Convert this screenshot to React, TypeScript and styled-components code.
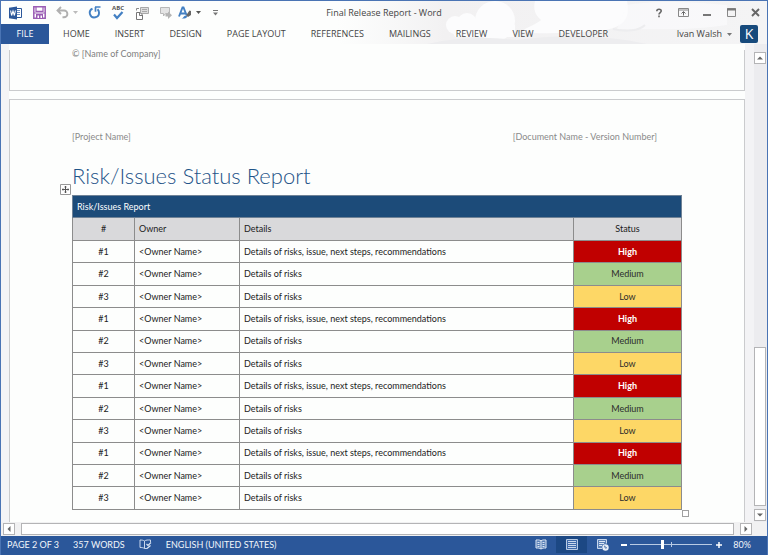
import React from 'react';
import styled, { createGlobalStyle, css } from 'styled-components';

const UI = '"Open Sans", "Noto Sans", sans-serif';
const BODY = 'Lato, "Open Sans", sans-serif';
const BLUE = '#2b579a';
const PAPER = '#fdfefd';

const Global = createGlobalStyle`
  * { box-sizing: border-box; }
  body { margin: 0; background: ${PAPER}; font-family: ${UI}; color: #444; }
  button { font: inherit; color: inherit; background: none; border: 0; padding: 0; margin: 0; cursor: pointer; }
`;

const Window = styled.div`
  display: flex;
  flex-direction: column;
  min-height: 100vh;
  border: 1px solid #4a74b4;
  border-bottom: 0;
  background: ${PAPER};
`;

/* ---------- Title bar and ribbon tabs ---------- */

const Ribbon = styled.header`
  position: relative;
  overflow: hidden;
`;

const Clouds = styled.svg`
  position: absolute;
  top: 0;
  right: 0;
  height: 100%;
`;

const TitleBar = styled.div`
  position: relative;
  display: grid;
  grid-template-columns: 1fr auto 1fr;
  align-items: center;
  height: 23px;
`;

const QuickAccess = styled.div`
  display: flex;
  align-items: center;
  gap: 10px;
  padding-left: 7px;
`;

const QuickGroup = styled.div`
  display: flex;
  align-items: center;
  gap: 6px;
`;

const QuickButton = styled.button`
  display: flex;
  align-items: center;
  gap: 4px;
  height: 16px;

  svg { display: block; }
`;

const WindowTitle = styled.h1`
  margin: 0;
  font-size: 9px;
  font-weight: 400;
  line-height: 14px;
`;

const WindowButtons = styled.div`
  display: flex;
  justify-content: flex-end;
`;

const WindowButton = styled.button`
  display: flex;
  align-items: center;
  justify-content: center;
  width: 24px;
  height: 20px;
`;

const TabBar = styled.nav`
  position: relative;
  display: flex;
  align-items: center;
  gap: 25px;
  height: 20px;
  padding-right: 9px;
  font-size: 9px;
  line-height: 20px;
`;

const FileTab = styled.button`
  width: 48px;
  height: 20px;
  margin-right: -11px;
  background: ${BLUE};
  color: #fff;
`;

const Tab = styled.button`
  height: 20px;
  white-space: nowrap;
`;

const Account = styled.div`
  display: flex;
  align-items: center;
  gap: 8px;
  margin-left: auto;
`;

const AccountName = styled.button`
  display: flex;
  align-items: center;
  gap: 5px;
  white-space: nowrap;
`;

const Avatar = styled.span`
  display: flex;
  align-items: center;
  justify-content: center;
  width: 18px;
  height: 18px;
  border-radius: 2px;
  background: #174a7c;
  color: #fff;
  font-size: 14px;
`;

/* ---------- Document area ---------- */

const Workspace = styled.main`
  display: flex;
  flex: 1;
`;

const Viewport = styled.div`
  display: flex;
  flex: 1;
  flex-direction: column;
  gap: 8px;
  padding: 6px 9px 0 8px;
  background: linear-gradient(90deg, #f4f4f6 8px, ${PAPER} 8px, ${PAPER} calc(100% - 9px), #f3f3f5 calc(100% - 9px));
`;

const Page = styled.article<{ $part: 'end' | 'start' }>`
  border: 1px solid #cacbcd;
  background: ${PAPER};
  font-family: ${BODY};
  font-size: 9px;
  ${({ $part }) =>
    $part === 'end'
      ? css`
          min-height: 41px;
          padding: 0 62px;
          border-top: 0;
        `
      : css`
          flex: 1;
          padding: 30px 62px 11px;
          border-bottom: 0;
        `}
`;

const Footnote = styled.p`
  margin: 0;
  color: #7f7f7f;
  line-height: 8px;
`;

const PageHeader = styled.div`
  display: flex;
  justify-content: space-between;
  padding-right: 25px;
  color: #8a8a8a;
  line-height: 14px;
`;

const Heading = styled.h2`
  margin: 18px 0 5px;
  color: #1f5488;
  font-size: 22px;
  font-weight: 300;
  line-height: 28px;
`;

const TableFrame = styled.div`
  position: relative;
`;

const MoveHandle = styled.button`
  position: absolute;
  top: -11px;
  left: -12px;
  width: 11px;
  height: 11px;

  svg { display: block; }
`;

const ResizeHandle = styled.span`
  position: absolute;
  right: -7px;
  bottom: -7px;
  width: 7px;
  height: 7px;
  border: 1px solid #a0a0a0;
  background: #fff;
`;

const RiskTable = styled.table`
  width: 100%;
  height: 315px;
  border-collapse: collapse;
  table-layout: fixed;
  color: #1c1c1c;
  line-height: 12px;
`;

const Col = styled.col<{ $width?: number }>`
  width: ${({ $width }) => ($width ? `${$width}px` : 'auto')};
`;

const cell = css<{ $center?: boolean }>`
  padding: 0 4px;
  border: 1px solid #8c8c8c;
  font-weight: 400;
  text-align: ${({ $center }) => ($center ? 'center' : 'left')};
`;

const BannerCell = styled.th`
  ${cell}
  height: 22px;
  background: #1c4b79;
  border-color: #6f8296;
  color: #fff;
`;

const HeadCell = styled.th`
  ${cell}
  height: 23px;
  background: #d9d9db;
`;

const Cell = styled.td`
  ${cell}
`;

type Level = 'High' | 'Medium' | 'Low';
const LEVELS: Record<Level, string> = { High: '#c00000', Medium: '#a8d08d', Low: '#fdd766' };

const StatusCell = styled(Cell)<{ $level: Level }>`
  background: ${({ $level }) => LEVELS[$level]};
  color: ${({ $level }) => ($level === 'High' ? '#fff' : '#2c2c2c')};
  font-weight: ${({ $level }) => ($level === 'High' ? 700 : 400)};
`;

/* ---------- Scroll bars ---------- */

const VerticalBar = styled.div`
  display: flex;
  flex-direction: column;
  width: 13px;
  padding: 8px 1px 1px 0;
  background: #ececef;
`;

const HorizontalBar = styled.div`
  display: flex;
  align-items: center;
  gap: 6px;
  height: 14px;
  padding: 0 15px 0 2px;
  background: #f1f1f2;
`;

const ArrowButton = styled.button`
  display: flex;
  flex: none;
  align-items: center;
  justify-content: center;
  width: 12px;
  height: 12px;
  border: 1px solid #b4b4b6;
  background: #fff;
`;

const VerticalTrack = styled.div`
  display: grid;
  flex: 1;
  grid-template-rows: 283fr 159fr 3fr;
`;

const Thumb = styled.div`
  flex: 1;
  grid-row: 2;
  min-height: 12px;
  border: 1px solid #b4b4b6;
  background: #fff;
`;

/* ---------- Status bar ---------- */

const StatusBar = styled.footer`
  display: flex;
  align-items: center;
  height: 19px;
  padding: 0 16px 2px 6px;
  background: ${BLUE};
  color: #f2f6fb;
  font-family: ${BODY};
  font-size: 9px;
  line-height: 17px;
`;

const StatusGroup = styled.div`
  display: flex;
  align-items: center;
  gap: 14px;
  margin-right: auto;
  white-space: nowrap;
`;

const ViewButton = styled.button<{ $active?: boolean }>`
  display: flex;
  align-items: center;
  justify-content: center;
  width: 31px;
  height: 17px;
  background: ${({ $active }) => ($active ? '#1c4884' : 'transparent')};
`;

const ZoomButton = styled.button`
  display: flex;
  align-items: center;
  justify-content: center;
  width: 11px;
  height: 17px;
`;

const ZoomSlider = styled.input`
  appearance: none;
  width: 82px;
  height: 11px;
  margin: 0 1px;
  background:
    linear-gradient(#b9cbe4, #b9cbe4) center / 1px 5px no-repeat,
    linear-gradient(#b9cbe4, #b9cbe4) center / 100% 1px no-repeat;

  &::-webkit-slider-thumb {
    appearance: none;
    width: 3px;
    height: 9px;
    background: #fff;
  }
`;

const ZoomValue = styled.button`
  width: 27px;
  text-align: right;
`;

/* ---------- Icons ---------- */

const Caret = ({ color = '#777' }: { color?: string }) => (
  <svg width="5" height="3" viewBox="0 0 5 3" aria-hidden="true"><path d="M0 0h5L2.5 3z" fill={color} /></svg>
);

const Arrow = ({ d }: { d: string }) => (
  <svg width="8" height="8" viewBox="0 0 8 8" aria-hidden="true"><path d={d} fill="#666" /></svg>
);

const WordIcon = () => (
  <svg width="15" height="14" viewBox="0 0 15 14" aria-hidden="true">
    <path d="M8.5 2.5h5v9h-5" fill="#fff" stroke={BLUE} />
    <path d="M9 4.5h3M9 6.5h3M9 8.500h3" stroke="#6f91c4" />
    <path d="M1 1.800 9 .500v13L1 12.200z" fill={BLUE} />
    <path d="m2.600 4.500 1 5 1.400-4.500 1.400 4.500 1-5" fill="none" stroke="#fff" strokeWidth="1.100" />
  </svg>
);

const SaveIcon = () => (
  <svg width="13" height="13" viewBox="0 0 13 13" aria-hidden="true">
    <path d="M.800.800h11.400v11.400H.800z" fill="#fff" stroke="#9a5cb4" strokeWidth="1.500" />
    <path d="M3 .800v4.500h7V.800M1 7h11" fill="none" stroke="#9a5cb4" strokeWidth="1.200" />
    <path d="M3 8h7v4.500H3z" fill="#9a5cb4" />
    <path d="M4.500 9.500h1.500V12H4.500zM7.500 9.500H9V12H7.500z" fill="#fff" />
  </svg>
);

const UndoIcon = () => (
  <svg width="13" height="13" viewBox="0 0 13 13" aria-hidden="true">
    <path d="M5 1 1.500 4.500 5 8M2 4.500h6a3.200 3.200 0 0 1 0 6.800H6.500" fill="none" stroke="#b0b0b0" strokeWidth="1.900" />
  </svg>
);

const RedoIcon = () => (
  <svg width="13" height="13" viewBox="0 0 13 13" aria-hidden="true">
    <path d="M4.500 2.600A4.600 4.600 0 1 0 11 6.500 4.600 4.600 0 0 0 9.500 3.200" fill="none" stroke="#4380c3" strokeWidth="1.900" />
    <path d="M7 1h5.500M7.500 1v4.800" fill="none" stroke="#4380c3" strokeWidth="1.700" />
  </svg>
);

const SpellIcon = () => (
  <svg width="14" height="15" viewBox="0 0 14 15" aria-hidden="true">
    <text x="7" y="5" textAnchor="middle" fontFamily="Open Sans, sans-serif" fontSize="6" fontWeight="700" fill="#555">ABC</text>
    <path d="m3 9.500 3 3.500 5.500-6" fill="none" stroke="#4380c3" strokeWidth="2.200" />
  </svg>
);

const SwitchIcon = () => (
  <svg width="14" height="14" viewBox="0 0 14 14" aria-hidden="true">
    <path d="M5.500 1.500h8v6h-8z" fill="#ddd" stroke="#a9a9a9" />
    <path d="M7 3.500h5M7 5.500h5" stroke="#a9a9a9" />
    <path d="M1.500 6.500H5l2.500 2.500v4.500h-6z" fill="#fff" stroke="#777" />
    <path d="M4.500 6.500v3h3" fill="none" stroke="#777" />
    <path d="M1.500 4.500v-2h2.500" fill="none" stroke="#888" />
  </svg>
);

const CommentIcon = () => (
  <svg width="13" height="14" viewBox="0 0 13 14" aria-hidden="true">
    <path d="M1.500 1.500h9v6h-4L4.500 10V7.500h-3z" fill="#e4e4e4" stroke="#b8b8b8" />
    <path d="M6.500 8H9V5.500L13 9.300 9 13v-2.500H6.500z" fill="#b4b4b4" />
  </svg>
);

const StyleIcon = () => (
  <svg width="14" height="14" viewBox="0 0 14 14" aria-hidden="true">
    <path d="M1 10.500 4.500 1.500h1L8.500 9M2.500 7.500h5" fill="none" stroke="#4380c3" strokeWidth="1.900" />
    <path d="m8 9.500 3.500-5 1.500.500V9l-3 2z" fill="#666" />
    <path d="M3.500 12.500c2 0 2-3 4.500-3 2 .500 1.500 3.500-4.500 3z" fill="#4380c3" />
  </svg>
);

const ProofIcon = () => (
  <svg width="13" height="11" viewBox="0 0 13 11" aria-hidden="true">
    <path d="M5.500 2v7.500M5.500 2C4 1 2.500 1 1 1v7.500c1.500 0 3 0 4.500 1M5.500 2C7 .800 9 1 11.500 1v2M5.500 9.500H8" fill="none" stroke="#c9d7ec" />
    <path d="m7.500 5 1.500 1.500L12 3.500M8 9.500 11.500 6.500" fill="none" stroke="#dce6f4" strokeWidth="1.200" />
  </svg>
);

const ReadIcon = () => (
  <svg width="12" height="11" viewBox="0 0 12 11" aria-hidden="true">
    <path d="M6 1.800C4.500.800 3 .800 1 1v8c2 0 3.500 0 5 1 1.500-1 3-1 5-1V1c-2-.200-3.500-.200-5 .800z" fill="#5d82b8" stroke="#dce6f4" />
    <path d="M6 2v8M2.500 3.500h2M2.500 5.500h2M2.500 7.500h2M7.500 3.500h2M7.500 5.500h2M7.500 7.500h2" stroke="#dce6f4" />
  </svg>
);

const PrintIcon = () => (
  <svg width="12" height="11" viewBox="0 0 12 11" aria-hidden="true">
    <path d="M.500.500h11v10H.500z" fill="#3f6bab" stroke="#b9cbe4" />
    <path d="M2 2.500h8M2 4.500h8M2 6.500h8M2 8.500h8" stroke="#c9d7ec" />
  </svg>
);

const WebIcon = () => (
  <svg width="12" height="12" viewBox="0 0 12 12" aria-hidden="true">
    <path d="M5 9.500H.500v-9h9v4" fill="#5d82b8" stroke="#c9d7ec" />
    <path d="M2 2.500h6M2 4.500h5M2 6.500h3" stroke="#dce6f4" />
    <circle cx="8.500" cy="8.500" r="3.200" fill="#e6edf7" />
    <path d="M7 7.500c1-.800 1.500 0 1 .800s1.500 1 2 .200" fill="none" stroke={BLUE} strokeWidth=".900" />
  </svg>
);

/* ---------- Data ---------- */

const TABS = ['HOME', 'INSERT', 'DESIGN', 'PAGE LAYOUT', 'REFERENCES', 'MAILINGS', 'REVIEW', 'VIEW', 'DEVELOPER'];

const RISKS: { id: string; details: string; level: Level }[] = [
  { id: '#1', details: 'Details of risks, issue, next steps, recommendations', level: 'High' },
  { id: '#2', details: 'Details of risks', level: 'Medium' },
  { id: '#3', details: 'Details of risks', level: 'Low' },
];
const ROWS = [0, 1, 2, 3].flatMap((group) => RISKS.map((risk) => ({ ...risk, key: `${group}${risk.id}` })));

export default function App() {
  return (
    <Window>
      <Global />
      <Ribbon>
        <Clouds width="430" height="43" viewBox="0 0 430 43" aria-hidden="true">
          <defs>
            <linearGradient id="sky" x1="0" x2="1">
              <stop offset="0" stopColor="#f3f3f4" stopOpacity="0" />
              <stop offset=".25" stopColor="#f2f1f2" />
              <stop offset="1" stopColor="#f4f4f5" />
            </linearGradient>
          </defs>
          <path d="M0 0h430v43H0z" fill="url(#sky)" />
          <g fill="#fcfcfd">
            <circle cx="158" cy="20" r="20" />
            <circle cx="130" cy="22" r="10" />
            <circle cx="118" cy="24" r="9" />
            <path d="M112 24h66v12h-60z" />
            <path d="M198 0h92c4 18-4 28-30 30-24 1-50 4-76 1 6-5 16-8 20-12-6-5-8-11-6-19z" />
            <path d="M290 4c20-4 60-4 100 0v20c-40 6-80 4-110 4z" opacity=".6" />
          </g>
          <path d="M90 43c30-7 60-8 90-4 40-6 90-5 130 4z" fill="#ededef" />
          <path d="M276 28c12 3 26 2 32-4" fill="none" stroke="#ededef" strokeWidth="2" />
        </Clouds>
        <TitleBar>
          <QuickAccess>
            <QuickButton aria-label="Word"><WordIcon /></QuickButton>
            <QuickButton aria-label="Save"><SaveIcon /></QuickButton>
            <QuickButton aria-label="Undo"><UndoIcon /><Caret color="#bbb" /></QuickButton>
            <QuickButton aria-label="Repeat"><RedoIcon /></QuickButton>
            <QuickButton aria-label="Spelling"><SpellIcon /></QuickButton>
            <QuickButton aria-label="Switch windows"><SwitchIcon /></QuickButton>
            <QuickGroup>
              <QuickButton aria-label="Next comment"><CommentIcon /></QuickButton>
              <QuickButton aria-label="Styles"><StyleIcon /><Caret color="#555" /></QuickButton>
            </QuickGroup>
            <QuickButton aria-label="Customize toolbar">
              <svg width="9" height="6" viewBox="0 0 9 6" aria-hidden="true">
                <path d="M2 .500h5" stroke="#777" /><path d="M2 2.500h5L4.500 5.500z" fill="#777" />
              </svg>
            </QuickButton>
          </QuickAccess>
          <WindowTitle>Final Release Report - Word</WindowTitle>
          <WindowButtons>
            <WindowButton aria-label="Help">
              <svg width="8" height="10" viewBox="0 0 8 10" aria-hidden="true">
                <path d="M1.800 3.200C1.800.600 6.200.600 6.200 3c0 1.500-2.200 1.600-2.200 3.500M4 7.500v1.700" fill="none" stroke="#666" strokeWidth="1.600" />
              </svg>
            </WindowButton>
            <WindowButton aria-label="Ribbon display options">
              <svg width="11" height="9" viewBox="0 0 11 9" aria-hidden="true">
                <path d="M.500.500h10v8H.500zM.500 2h10" fill="none" stroke="#888" />
                <path d="M5.500 7.500V4M3.500 5.500l2-2 2 2" fill="none" stroke="#666" />
              </svg>
            </WindowButton>
            <WindowButton aria-label="Minimize">
              <svg width="8" height="8" viewBox="0 0 8 8" aria-hidden="true"><path d="M0 6h8" stroke="#777" strokeWidth="2" /></svg>
            </WindowButton>
            <WindowButton aria-label="Maximize">
              <svg width="9" height="9" viewBox="0 0 9 9" aria-hidden="true">
                <path d="M.500.500h8v8h-8z" fill="none" stroke="#888" /><path d="M0 1.500h9" stroke="#777" strokeWidth="2" />
              </svg>
            </WindowButton>
            <WindowButton aria-label="Close">
              <svg width="9" height="9" viewBox="0 0 9 9" aria-hidden="true"><path d="m1 1 7 7M8 1 1 8" stroke="#666" strokeWidth="1.900" /></svg>
            </WindowButton>
          </WindowButtons>
        </TitleBar>
        <TabBar>
          <FileTab>FILE</FileTab>
          {TABS.map((tab) => <Tab key={tab}>{tab}</Tab>)}
          <Account>
            <AccountName>Ivan Walsh <Caret /></AccountName>
            <Avatar>K</Avatar>
          </Account>
        </TabBar>
      </Ribbon>

      <Workspace>
        <Viewport>
          <Page $part="end">
            <Footnote>© [Name of Company]</Footnote>
          </Page>
          <Page $part="start">
            <PageHeader>
              <span>[Project Name]</span>
              <span>[Document Name - Version Number]</span>
            </PageHeader>
            <Heading>Risk/Issues Status Report</Heading>
            <TableFrame>
              <MoveHandle aria-label="Move table">
                <svg width="11" height="11" viewBox="0 0 11 11" aria-hidden="true">
                  <path d="M.500.500h10v10H.500z" fill="#fff" stroke="#999" />
                  <path d="M5.500 2v7M2 5.500h7M4.500 3h2M4.500 8h2M3 4.500v2M8 4.500v2" stroke="#555" />
                </svg>
              </MoveHandle>
              <RiskTable>
                <colgroup>
                  <Col $width={62} />
                  <Col $width={105} />
                  <Col />
                  <Col $width={108} />
                </colgroup>
                <thead>
                  <tr><BannerCell colSpan={4}>Risk/Issues Report</BannerCell></tr>
                  <tr>
                    <HeadCell $center>#</HeadCell>
                    <HeadCell>Owner</HeadCell>
                    <HeadCell>Details</HeadCell>
                    <HeadCell $center>Status</HeadCell>
                  </tr>
                </thead>
                <tbody>
                  {ROWS.map((row) => (
                    <tr key={row.key}>
                      <Cell $center>{row.id}</Cell>
                      <Cell>&lt;Owner Name&gt;</Cell>
                      <Cell>{row.details}</Cell>
                      <StatusCell $center $level={row.level}>{row.level}</StatusCell>
                    </tr>
                  ))}
                </tbody>
              </RiskTable>
              <ResizeHandle />
            </TableFrame>
          </Page>
        </Viewport>
        <VerticalBar>
          <ArrowButton aria-label="Scroll up"><Arrow d="M1 5.500h6L4 2.500z" /></ArrowButton>
          <VerticalTrack><Thumb /></VerticalTrack>
          <ArrowButton aria-label="Scroll down"><Arrow d="M1 2.500h6L4 5.500z" /></ArrowButton>
        </VerticalBar>
      </Workspace>
      <HorizontalBar>
        <ArrowButton aria-label="Scroll left"><Arrow d="M5.500 1v6L2.500 4z" /></ArrowButton>
        <Thumb />
        <ArrowButton aria-label="Scroll right"><Arrow d="M2.500 1v6L5.500 4z" /></ArrowButton>
      </HorizontalBar>

      <StatusBar>
        <StatusGroup>
          <span>PAGE 2 OF 3</span>
          <span>357 WORDS</span>
          <ProofIcon />
          <span>ENGLISH (UNITED STATES)</span>
        </StatusGroup>
        <ViewButton aria-label="Read mode"><ReadIcon /></ViewButton>
        <ViewButton aria-label="Print layout" $active><PrintIcon /></ViewButton>
        <ViewButton aria-label="Web layout"><WebIcon /></ViewButton>
        <ZoomButton aria-label="Zoom out">
          <svg width="6" height="6" viewBox="0 0 6 6" aria-hidden="true"><path d="M0 3h6" stroke="#fff" strokeWidth="2" /></svg>
        </ZoomButton>
        <ZoomSlider type="range" min={10} max={190} defaultValue={80} aria-label="Zoom" />
        <ZoomButton aria-label="Zoom in">
          <svg width="6" height="6" viewBox="0 0 6 6" aria-hidden="true"><path d="M0 3h6M3 0v6" stroke="#fff" strokeWidth="1.500" /></svg>
        </ZoomButton>
        <ZoomValue>80%</ZoomValue>
      </StatusBar>
    </Window>
  );
}
